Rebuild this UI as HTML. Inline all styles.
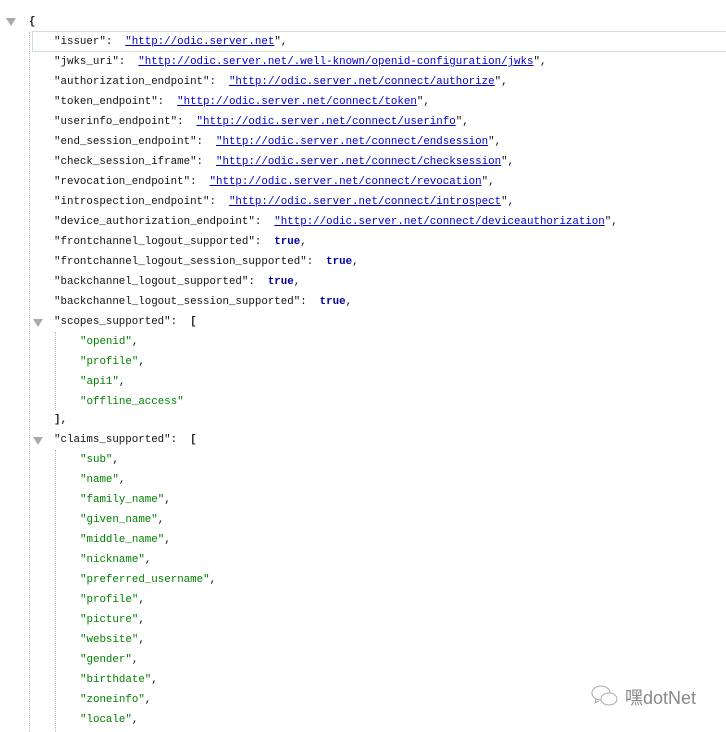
<!DOCTYPE html>
<html><head><style>
body{margin:0;background:#fff;width:726px;height:730px;overflow:hidden;position:relative;font-family:"Liberation Mono",monospace;font-size:10.8px;color:#111}
#w{position:absolute;left:0;top:2px;width:726px;height:730px}
.l{position:absolute;height:20px;line-height:20px;white-space:pre}
a{color:#0000cc;text-decoration:underline}
.t{color:#0000a0;font-weight:bold}
.g{color:#008000}
.b{font-weight:bold;color:#222}
.tri{position:absolute;width:0;height:0;border-left:5px solid transparent;border-right:5px solid transparent;border-top:8px solid #aaa}
.vd{position:absolute;border-left:1px dotted #bbb;width:0}
</style></head><body><div id="w">
<div class="tri" style="left:6px;top:16px"></div>
<div class="l b" style="left:29px;top:10px">{</div>
<div class="vd" style="left:29px;top:30px;height:700px"></div>
<div style="position:absolute;left:32px;top:29px;width:700px;height:19px;border:1px solid #cfe0cf;border-right:none"></div>
<div class="l" style="left:54px;top:30px">"issuer":  <a>"http://odic.server.net</a>",</div>
<div class="l" style="left:54px;top:50px">"jwks_uri":  <a>"http://odic.server.net/.well-known/openid-configuration/jwks</a>",</div>
<div class="l" style="left:54px;top:70px">"authorization_endpoint":  <a>"http://odic.server.net/connect/authorize</a>",</div>
<div class="l" style="left:54px;top:90px">"token_endpoint":  <a>"http://odic.server.net/connect/token</a>",</div>
<div class="l" style="left:54px;top:110px">"userinfo_endpoint":  <a>"http://odic.server.net/connect/userinfo</a>",</div>
<div class="l" style="left:54px;top:130px">"end_session_endpoint":  <a>"http://odic.server.net/connect/endsession</a>",</div>
<div class="l" style="left:54px;top:150px">"check_session_iframe":  <a>"http://odic.server.net/connect/checksession</a>",</div>
<div class="l" style="left:54px;top:170px">"revocation_endpoint":  <a>"http://odic.server.net/connect/revocation</a>",</div>
<div class="l" style="left:54px;top:190px">"introspection_endpoint":  <a>"http://odic.server.net/connect/introspect</a>",</div>
<div class="l" style="left:54px;top:210px">"device_authorization_endpoint":  <a>"http://odic.server.net/connect/deviceauthorization</a>",</div>
<div class="l" style="left:54px;top:230px">"frontchannel_logout_supported":  <span class="t">true</span>,</div>
<div class="l" style="left:54px;top:250px">"frontchannel_logout_session_supported":  <span class="t">true</span>,</div>
<div class="l" style="left:54px;top:270px">"backchannel_logout_supported":  <span class="t">true</span>,</div>
<div class="l" style="left:54px;top:290px">"backchannel_logout_session_supported":  <span class="t">true</span>,</div>
<div class="tri" style="left:33px;top:317px"></div>
<div class="l" style="left:54px;top:310px">"scopes_supported":  <span class="b">[</span></div>
<div class="vd" style="left:55px;top:330px;height:78px"></div>
<div class="l g" style="left:80px;top:330px">"openid"<span style="color:#111">,</span></div>
<div class="l g" style="left:80px;top:350px">"profile"<span style="color:#111">,</span></div>
<div class="l g" style="left:80px;top:370px">"api1"<span style="color:#111">,</span></div>
<div class="l g" style="left:80px;top:390px">"offline_access"</div>
<div class="l b" style="left:54px;top:408px">],</div>
<div class="tri" style="left:33px;top:435px"></div>
<div class="l" style="left:54px;top:428px">"claims_supported":  <span class="b">[</span></div>
<div class="vd" style="left:55px;top:448px;height:282px"></div>
<div class="l g" style="left:80px;top:448px">"sub"<span style="color:#111">,</span></div>
<div class="l g" style="left:80px;top:468px">"name"<span style="color:#111">,</span></div>
<div class="l g" style="left:80px;top:488px">"family_name"<span style="color:#111">,</span></div>
<div class="l g" style="left:80px;top:508px">"given_name"<span style="color:#111">,</span></div>
<div class="l g" style="left:80px;top:528px">"middle_name"<span style="color:#111">,</span></div>
<div class="l g" style="left:80px;top:548px">"nickname"<span style="color:#111">,</span></div>
<div class="l g" style="left:80px;top:568px">"preferred_username"<span style="color:#111">,</span></div>
<div class="l g" style="left:80px;top:588px">"profile"<span style="color:#111">,</span></div>
<div class="l g" style="left:80px;top:608px">"picture"<span style="color:#111">,</span></div>
<div class="l g" style="left:80px;top:628px">"website"<span style="color:#111">,</span></div>
<div class="l g" style="left:80px;top:648px">"gender"<span style="color:#111">,</span></div>
<div class="l g" style="left:80px;top:668px">"birthdate"<span style="color:#111">,</span></div>
<div class="l g" style="left:80px;top:688px">"zoneinfo"<span style="color:#111">,</span></div>
<div class="l g" style="left:80px;top:708px">"locale"<span style="color:#111">,</span></div>
</div>
<svg style="position:absolute;left:590px;top:684px" width="30" height="26" viewBox="0 0 30 26" fill="none" stroke="#aaa" stroke-width="1"><ellipse cx="11" cy="9" rx="9" ry="7"/><ellipse cx="19" cy="15" rx="8" ry="6" fill="#fff"/><path d="M6 15l-1 4 4-2"/></svg>
<div style="position:absolute;left:625px;top:688px;font-family:'Liberation Sans','Noto Sans CJK SC',sans-serif;font-size:18px;color:#888;line-height:20px">嘿dotNet</div>
</body></html>
